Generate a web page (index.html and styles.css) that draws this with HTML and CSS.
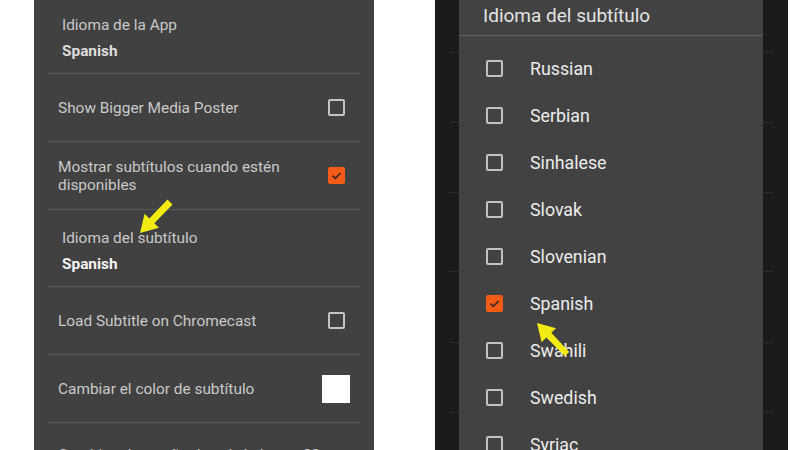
FILE: index.html
```html
<!DOCTYPE html>
<html lang="es">
<head>
<meta charset="utf-8">
<title>Idioma del subtítulo</title>
<link rel="stylesheet" href="styles.css">
</head>
<body>
<div class="stage">
  <section class="panel">
    <div class="prefs">
      <div class="pref pref-two">
        <div class="pref-title">Idioma de la App</div>
        <div class="pref-summary">Spanish</div>
      </div>
      <div class="pref pref-one">
        <div class="pref-label">Show Bigger Media Poster</div>
        <span class="cb"></span>
      </div>
      <div class="pref pref-one">
        <div class="pref-label wrap">Mostrar subtítulos cuando estén disponibles</div>
        <span class="cb cb-on"><svg viewBox="0 0 17 17" width="17" height="17"><polyline points="4.5,8.6 7.4,11.4 12.6,6" fill="none" stroke="#3a2a22" stroke-width="1.7"/></svg></span>
      </div>
      <div class="pref pref-two">
        <div class="pref-title">Idioma del subtítulo</div>
        <div class="pref-summary bright">Spanish</div>
      </div>
      <div class="pref pref-one">
        <div class="pref-label">Load Subtitle on Chromecast</div>
        <span class="cb"></span>
      </div>
      <div class="pref pref-one pref-color">
        <div class="pref-label">Cambiar el color de subtítulo</div>
        <span class="swatch"></span>
      </div>
      <div class="pref pref-last">
        <div class="pref-label">Cambiar el tamaño de subtítulo</div>
        <span class="size">22</span>
      </div>
    </div>
  </section>

  <section class="screen">
    <div class="backdrop">
      <div class="bd-line l1"></div>
      <div class="bd-line l2"></div>
      <div class="bd-line l3"></div>
      <div class="bd-line l4"></div>
      <div class="bd-line l5"></div>
      <div class="bd-line l6"></div>
    </div>
    <div class="dialog">
      <div class="dialog-title">Idioma del subtítulo</div>
      <ul class="options">
        <li class="opt"><span class="box"></span><span class="opt-text">Russian</span></li>
        <li class="opt"><span class="box"></span><span class="opt-text">Serbian</span></li>
        <li class="opt"><span class="box"></span><span class="opt-text">Sinhalese</span></li>
        <li class="opt"><span class="box"></span><span class="opt-text">Slovak</span></li>
        <li class="opt"><span class="box"></span><span class="opt-text">Slovenian</span></li>
        <li class="opt"><span class="box box-on"><svg viewBox="0 0 17 17" width="17" height="17"><polyline points="4.5,8.6 7.4,11.4 12.6,6" fill="none" stroke="#3a2a22" stroke-width="1.7"/></svg></span><span class="opt-text">Spanish</span></li>
        <li class="opt"><span class="box"></span><span class="opt-text">Swahili</span></li>
        <li class="opt"><span class="box"></span><span class="opt-text">Swedish</span></li>
        <li class="opt"><span class="box"></span><span class="opt-text">Syriac</span></li>
      </ul>
    </div>
  </section>

  <svg class="arrows" width="800" height="450" viewBox="0 0 800 450">
    <polygon fill="#f3ec12" points="140,233 159,227.8 154.3,223.2 172.5,204.4 167.5,199.6 149.3,218.4 144.6,213.8"/>
    <polygon fill="#f3ec12" points="537,323 556,328.2 551.3,332.8 569.2,351.9 564.8,356.1 546.3,337.6 541.6,342.2"/>
  </svg>
</div>
</body>
</html>
```

FILE: styles.css
```css
html, body {
  margin: 0;
  padding: 0;
  background: #ffffff;
}

.stage {
  position: relative;
  width: 800px;
  height: 450px;
  overflow: hidden;
  display: flex;
  font-family: Roboto, "Liberation Sans", sans-serif;
}

/* ---------- left settings panel ---------- */
.panel {
  margin-left: 34px;
  width: 340px;
  height: 450px;
  background: #414141;
  overflow: hidden;
}

.prefs {
  margin-top: -3px;
  padding: 0 14px;
}

.pref {
  border-bottom: 1px solid #5a5a5a;
  box-sizing: border-box;
}

.pref-two {
  height: 77px;
  padding: 17px 0 0 14px;
}

.pref-title {
  font-size: 15.4px;
  line-height: 22px;
  color: #c9c9c9;
}

.pref-summary {
  margin-top: 4px;
  font-size: 15.4px;
  line-height: 22px;
  font-weight: 700;
  color: #dedede;
}

.pref-summary.bright {
  color: #f4f4f4;
}

.pref-one {
  height: 68px;
  display: flex;
  align-items: center;
  justify-content: space-between;
  padding: 0 15px 0 10px;
}

.pref-label {
  font-size: 15.4px;
  line-height: 18px;
  color: #c9c9c9;
}

.pref-label.wrap {
  width: 245px;
}

.pref-color {
  padding-right: 10px;
}

.pref-last {
  border-bottom: none;
  display: flex;
  justify-content: space-between;
  padding: 23px 40px 0 10px;
}

.size {
  font-size: 15.4px;
  line-height: 18px;
  color: #c9c9c9;
}

.cb {
  width: 17px;
  height: 17px;
  box-sizing: border-box;
  border: 2px solid #c4c4c4;
  border-radius: 2px;
  flex: none;
}

.cb-on {
  border: none;
  background: #f35b17;
  display: block;
}

.cb-on svg,
.box-on svg {
  display: block;
}

.swatch {
  width: 28px;
  height: 28px;
  background: #ffffff;
  flex: none;
}

/* ---------- right: dialog over dimmed screen ---------- */
.screen {
  position: relative;
  margin-left: 61px;
  width: 353px;
  height: 450px;
  background: #1b1b1b;
}

.backdrop {
  padding: 0 15px;
}

.bd-line {
  height: 1px;
  background: #2c2c2c;
}

.l1 { margin-top: 52px; }
.l2 { margin-top: 69px; }
.l3 { margin-top: 69px; }
.l4 { margin-top: 78px; }
.l5 { margin-top: 70px; }
.l6 { margin-top: 69px; }

.dialog {
  position: absolute;
  top: 0;
  bottom: 0;
  left: 24px;
  width: 304px;
  background: #424242;
}

.dialog-title {
  height: 36px;
  box-sizing: border-box;
  border-bottom: 1px solid #616161;
  padding-left: 24px;
  font-size: 19px;
  line-height: 31px;
  color: #e4e4e4;
}

.options {
  list-style: none;
  margin: 0;
  padding: 9px 0 0 0;
}

.opt {
  height: 47px;
  display: flex;
  align-items: center;
  padding-left: 27px;
}

.box {
  width: 17px;
  height: 17px;
  box-sizing: border-box;
  border: 2px solid #c2c2c2;
  border-radius: 2px;
  flex: none;
}

.box-on {
  border: none;
  background: #f35b17;
}

.opt-text {
  margin-left: 27px;
  font-size: 17.8px;
  color: #ececec;
}

/* ---------- annotation arrows ---------- */
.arrows {
  position: absolute;
  left: 0;
  top: 0;
  pointer-events: none;
}
```
